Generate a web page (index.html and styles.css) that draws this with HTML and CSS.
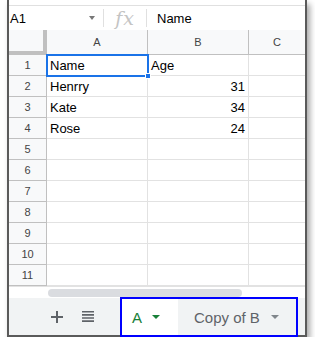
FILE: index.html
```html
<!DOCTYPE html>
<html>
<head>
<meta charset="utf-8">
<link rel="stylesheet" href="styles.css">
</head>
<body>
<div class="frame">
  <div class="fbar">
    <div class="namebox"><span>A1</span><span class="caret"></span></div>
    <div class="sep"></div>
    <div class="fx">fx</div>
    <div class="sep"></div>
    <div class="fval">Name</div>
  </div>
  <div class="grid">
    <div class="corner"></div><div class="ch">A</div><div class="ch">B</div><div class="ch last">C</div>

    <div class="rh">1</div><div class="c sel">Name<span class="handle"></span></div><div class="c">Age</div><div class="c last"></div>
    <div class="rh">2</div><div class="c">Henrry</div><div class="c num">31</div><div class="c last"></div>
    <div class="rh">3</div><div class="c">Kate</div><div class="c num">34</div><div class="c last"></div>
    <div class="rh">4</div><div class="c">Rose</div><div class="c num">24</div><div class="c last"></div>
    <div class="rh">5</div><div class="c"></div><div class="c"></div><div class="c last"></div>
    <div class="rh">6</div><div class="c"></div><div class="c"></div><div class="c last"></div>
    <div class="rh">7</div><div class="c"></div><div class="c"></div><div class="c last"></div>
    <div class="rh">8</div><div class="c"></div><div class="c"></div><div class="c last"></div>
    <div class="rh">9</div><div class="c"></div><div class="c"></div><div class="c last"></div>
    <div class="rh">10</div><div class="c"></div><div class="c"></div><div class="c last"></div>
    <div class="rh">11</div><div class="c"></div><div class="c"></div><div class="c last"></div>
  </div>
  <div class="hscroll"><div class="pill"></div></div>
  <div class="tabbar">
    <div class="tool plus">
      <svg width="12" height="12" viewBox="0 0 12 12"><path d="M5 0h2v5h5v2H7v5H5V7H0V5h5z" fill="#5f6368"/></svg>
    </div>
    <div class="tool menu">
      <svg width="12" height="11" viewBox="0 0 12 11"><path d="M0 0h12v1.6H0zM0 3.1h12v1.6H0zM0 6.2h12v1.6H0zM0 9.3h12v1.6H0z" fill="#5f6368"/></svg>
    </div>
    <div class="tabs">
      <div class="tab active">A<span class="tri green"></span></div>
      <div class="tab other">Copy of B<span class="tri gray"></span></div>
    </div>
  </div>
</div>
</body>
</html>
```

FILE: styles.css
```css
* { box-sizing: border-box; }
html, body { margin: 0; padding: 0; background: #fff; }
body { font-family: "Liberation Sans", Arial, sans-serif; color: #000; }

.frame {
  margin-left: 7px;
  width: 300px;
  height: 337px;
  padding-top: 5px;
  background: #fff;
  border-left: 2px solid #5a5a5a;
  border-right: 2px solid #5a5a5a;
  border-bottom: 2px solid #5a5a5a;
  box-shadow: 3px 4px 6px rgba(0,0,0,0.35);
  display: flex;
  flex-direction: column;
}

.fbar {
  height: 25px;
  border-top: 1px solid #e0e0e0;
  display: flex;
  align-items: center;
  font-size: 13px;
}
.namebox {
  width: 94px;
  padding-left: 1px;
  display: flex;
  align-items: center;
  justify-content: space-between;
  padding-right: 8px;
}
.caret {
  width: 0; height: 0;
  border-left: 3.5px solid transparent;
  border-right: 3.5px solid transparent;
  border-top: 4px solid #777;
}
.sep { width: 1px; height: 18px; background: #e0e0e0; }
.fx {
  width: 42px;
  text-align: center;
  font-family: "DejaVu Serif", "Liberation Serif", serif;
  font-style: italic;
  font-size: 19px;
  color: #c4c4c4;
  line-height: 20px;
  letter-spacing: 1px;
}
.fval { padding-left: 10px; }

.grid {
  display: grid;
  grid-template-columns: 38px 101px 101px 1fr;
  grid-template-rows: 25px repeat(11, 21px);
}
.corner {
  background: #f8f9fa;
  border-right: 4px solid #c0c0c0;
  border-bottom: 4px solid #c0c0c0;
}
.ch {
  background: #f8f9fa;
  border-right: 1px solid #c0c0c0;
  border-bottom: 1px solid #c0c0c0;
  font-size: 11px;
  color: #444;
  display: flex;
  align-items: center;
  justify-content: center;
}
.ch.last { border-right: none; }
.rh {
  background: #f8f9fa;
  border-right: 1px solid #c0c0c0;
  border-bottom: 1px solid #c0c0c0;
  font-size: 11px;
  color: #444;
  display: flex;
  align-items: center;
  justify-content: center;
}
.c {
  border-right: 1px solid #e2e2e2;
  border-bottom: 1px solid #e2e2e2;
  font-size: 13px;
  padding: 0 3px;
  display: flex;
  align-items: center;
  position: relative;
}
.c.last { border-right: none; }
.c.num { justify-content: flex-end; }
.c.sel { outline: 2px solid #1a73e8; outline-offset: -1px; z-index: 1; }
.handle {
  position: absolute;
  right: -4px;
  bottom: -4px;
  width: 6px;
  height: 6px;
  background: #1a73e8;
  border: 1px solid #fff;
}

.hscroll {
  height: 12px;
  position: relative;
  border-top: 1px solid #e2e2e2;
  padding: 2px 0 0 39px;
}
.pill {
  width: 194px;
  height: 8px;
  border-radius: 4px;
  background: #dadce0;
}

.tabbar {
  height: 37px;
  background: #f1f3f4;
  display: flex;
  align-items: stretch;
}
.tool { display: flex; align-items: center; justify-content: center; }
.plus { margin-left: 42px; width: 12px; }
.menu { margin-left: 19px; width: 12px; }
.tabs {
  margin-left: 28px;
  margin-top: 1px;
  display: flex;
  outline: 2px solid #0000ff;
  width: 174px;
  height: 36px;
}
.tab {
  display: flex;
  align-items: center;
  font-size: 15px;
}
.tab.active {
  width: 56px;
  padding-left: 10px;
  color: #188038;
  background: #fff;
  box-shadow: 0 1px 2px rgba(0,0,0,0.15);
}
.tab.other {
  flex: 1;
  padding-left: 16px;
  color: #5f6368;
  background: #f1f3f4;
}
.tri {
  width: 0; height: 0;
  border-left: 4px solid transparent;
  border-right: 4px solid transparent;
  border-top: 4px solid;
}
.tri.green { border-top-color: #188038; margin-left: 10px; }
.tri.gray { border-top-color: #80868b; margin-left: 11px; }
```
